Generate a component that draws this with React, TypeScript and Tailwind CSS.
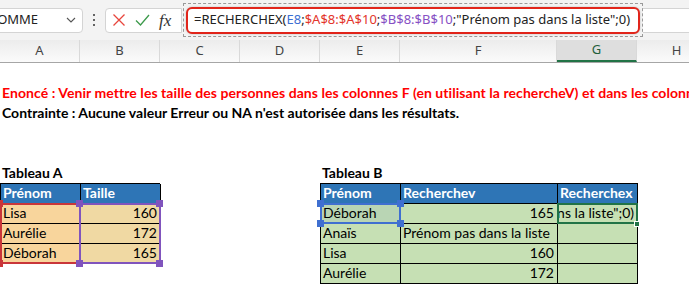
import React from "react";

const letters = [
  { l: "A", w: "w-[80px]" },
  { l: "B", w: "w-[80px]" },
  { l: "C", w: "w-[80px]" },
  { l: "D", w: "w-[80px]" },
  { l: "E", w: "w-[80px]" },
  { l: "F", w: "w-[157px]" },
  { l: "G", w: "w-[80px]" },
  { l: "H", w: "w-[80px]" },
];

const tableA = [
  ["Lisa", "160"],
  ["Aurélie", "172"],
  ["Déborah", "165"],
];

const tableB = [
  ["Déborah", "165", ""],
  ["Anaïs", "Prénom pas dans la liste", ""],
  ["Lisa", "160", ""],
  ["Aurélie", "172", ""],
];

function Handle({ className }: { className: string }) {
  return <div className={`absolute w-[7px] h-[7px] ${className}`} />;
}

function Toolbar() {
  return (
    <div className="h-[40px] bg-[#f3f3f3] flex items-center font-['Noto_Sans',sans-serif] text-[13px] text-[#222]">
      <div className="-ml-[20px] w-[103px] h-[25px] bg-white border border-[#d4d4d4] rounded-[4px] flex items-center justify-between pl-[9px] pr-[6px] shrink-0">
        <span>SOMME</span>
        <svg width="10" height="6" viewBox="0 0 10 6">
          <path d="M1 1l4 4 4-4" fill="none" stroke="#555" strokeWidth="1.1" />
        </svg>
      </div>
      <div className="w-[22px] flex flex-col items-center gap-[2.5px] shrink-0">
        <div className="w-[2.5px] h-[2.5px] rounded-full bg-[#333]" />
        <div className="w-[2.5px] h-[2.5px] rounded-full bg-[#333]" />
        <div className="w-[2.5px] h-[2.5px] rounded-full bg-[#333]" />
      </div>
      <div className="w-[77px] h-[25px] bg-white border border-[#d4d4d4] rounded-l-[4px] flex items-center pl-[6px] gap-[9px] shrink-0">
        <svg width="14" height="14" viewBox="0 0 14 14">
          <path d="M1.5 1.5l11 11M12.5 1.5l-11 11" stroke="#e8453c" strokeWidth="1.3" />
        </svg>
        <svg width="15" height="12" viewBox="0 0 15 12">
          <path d="M1 6.5l4.5 4.5L14 1" fill="none" stroke="#3c9a4b" strokeWidth="1.3" />
        </svg>
        <span className="font-['Liberation_Serif',serif] italic text-[17px] text-[#333] leading-none">fx</span>
      </div>
      <div className="ml-[1px] h-[34px] w-[460px] border border-dashed border-[#9a9a9a] flex items-center px-[2px] shrink-0">
        <div className="h-[27px] w-full bg-white border-2 border-[#e1251b] rounded-[6px] flex items-center pl-[6px] whitespace-nowrap shadow-[0_0_2px_rgba(0,0,0,0.25)]">
          <span>=RECHERCHEX(</span>
          <span className="text-[#3c6fd2]">E8</span>
          <span>;</span>
          <span className="text-[#e3352b]">$A$8:$A$10</span>
          <span>;</span>
          <span className="text-[#8650c4]">$B$8:$B$10</span>
          <span>;"Prénom pas dans la liste";0)</span>
        </div>
      </div>
      <div className="flex-1 h-[25px] bg-white border-y border-[#d4d4d4]" />
    </div>
  );
}

function ColumnHeaders() {
  return (
    <div className="h-[23px] flex bg-gradient-to-b from-[#ececec] to-[#fbfbfb] border-b border-[#a6a6a6] font-['Noto_Sans',sans-serif] text-[13px] text-[#444] overflow-hidden">
      {letters.map((c) => (
        <div
          key={c.l}
          className={`${c.w} shrink-0 flex items-center justify-center border-r border-[#d9d9d9] ${
            c.l === "G" ? "bg-[#dedede] border-b-2 border-b-[#217346] text-[#1f5f3b]" : ""
          }`}
        >
          {c.l}
        </div>
      ))}
    </div>
  );
}

function TableA() {
  return (
    <div className="relative w-[160px] shrink-0">
      <div className="grid grid-cols-[80px_80px] auto-rows-[20px] border-l border-t border-black">
        <div className="bg-[#2e75b6] text-white font-bold border-r border-b border-black flex items-end pl-[2px]">Prénom</div>
        <div className="bg-[#2e75b6] text-white font-bold border-r border-b border-black flex items-end pl-[2px]">Taille</div>
        {tableA.map(([n, t]) => (
          <React.Fragment key={n}>
            <div className="bg-[#f8d59c] border-r border-b border-black flex items-end pl-[2px]">{n}</div>
            <div className="bg-[#f0d9a3] border-r border-b border-black flex items-end justify-end pr-[3px]">{t}</div>
          </React.Fragment>
        ))}
      </div>
      <div className="absolute left-0 top-[20px] w-[81px] h-[61px] border-2 border-[#c9363a]" />
      <div className="absolute left-[79px] top-[20px] w-[82px] h-[61px] border-2 border-[#8054bd]" />
      <Handle className="-left-[4px] top-[17px] bg-[#c9363a]" />
      <Handle className="-left-[4px] top-[77px] bg-[#c9363a]" />
      <Handle className="left-[76px] top-[17px] bg-[#8054bd]" />
      <Handle className="left-[156px] top-[17px] bg-[#8054bd]" />
      <Handle className="left-[76px] top-[77px] bg-[#8054bd]" />
      <Handle className="left-[156px] top-[77px] bg-[#8054bd]" />
    </div>
  );
}

function TableB() {
  return (
    <div className="relative w-[318px] shrink-0">
      <div className="grid grid-cols-[80px_157px_80px] auto-rows-[20px] border-l border-t border-black">
        {["Prénom", "Recherchev", "Recherchex"].map((h) => (
          <div key={h} className="bg-[#2e75b6] text-white font-bold border-r border-b border-black flex items-end pl-[2px]">
            {h}
          </div>
        ))}
        {tableB.map(([n, v], i) => (
          <React.Fragment key={n}>
            <div className={`${i === 0 ? "bg-[#b9d5b4]" : "bg-[#c6e0b4]"} border-r border-b border-black flex items-end pl-[2px]`}>{n}</div>
            <div
              className={`bg-[#c6e0b4] border-r border-b border-black flex items-end ${
                i === 1 ? "pl-[2px]" : "justify-end pr-[3px]"
              }`}
            >
              {v}
            </div>
            <div className="bg-[#c6e0b4] border-r border-b border-black flex items-end justify-end pr-[3px] overflow-hidden whitespace-nowrap">
              {i === 0 ? '"Prénom pas dans la liste";0)' : ""}
            </div>
          </React.Fragment>
        ))}
      </div>
      <div className="absolute left-0 top-[20px] w-[81px] h-[21px] border-2 border-[#3f6fd0]" />
      <Handle className="-left-[3px] top-[17px] bg-[#3f6fd0]" />
      <Handle className="left-[77px] top-[17px] bg-[#3f6fd0]" />
      <Handle className="-left-[3px] top-[37px] bg-[#3f6fd0]" />
      <Handle className="left-[77px] top-[37px] bg-[#3f6fd0]" />
      <div className="absolute left-[237px] top-[20px] w-[81px] h-[21px] border-2 border-[#217346]" />
      <div className="absolute left-[314px] top-[38px] w-[6px] h-[6px] bg-[#217346] border border-white" />
    </div>
  );
}

export default function App() {
  return (
    <div className="w-[689px] h-[304px] overflow-hidden bg-white">
      <Toolbar />
      <ColumnHeaders />
      <div className="font-['Lato',sans-serif] text-[14px] text-black">
        <div className="h-[20px]" />
        <div className="h-[20px] flex items-end pl-[2px] whitespace-nowrap font-bold text-[#ff0000] tracking-[0.06px]">
          Enoncé : Venir mettre les taille des personnes dans les colonnes F (en utilisant la rechercheV) et dans les colonnes G (en utilisant la rechercheX)
        </div>
        <div className="h-[20px] flex items-end pl-[2px] whitespace-nowrap font-bold">
          Contrainte : Aucune valeur Erreur ou NA n'est autorisée dans les résultats.
        </div>
        <div className="h-[40px]" />
        <div className="h-[20px] flex items-end font-bold">
          <div className="w-[320px] pl-[2px]">Tableau A</div>
          <div className="pl-[2px]">Tableau B</div>
        </div>
        <div className="flex">
          <TableA />
          <div className="w-[160px] shrink-0" />
          <TableB />
        </div>
      </div>
    </div>
  );
}
